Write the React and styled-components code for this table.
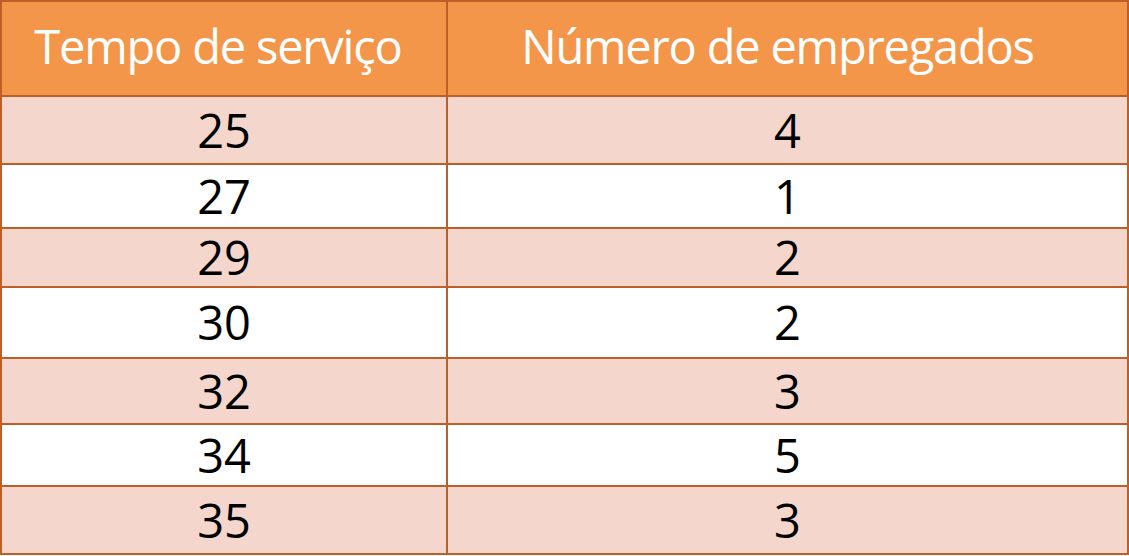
import React from 'react';
import styled, { createGlobalStyle } from 'styled-components';

const GlobalStyle = createGlobalStyle`
  html, body {
    margin: 0;
    padding: 0;
    background: #ffffff;
  }
  body {
    font-family: "Open Sans", "Noto Sans", sans-serif;
  }
`;

const Table = styled.div`
  width: 1129px;
  box-sizing: border-box;
  display: grid;
  grid-template-columns: 444px 1fr;
  grid-template-rows: ${p => p.rows};
  gap: 2px;
  padding: 2px;
  background: #bd5f26;
`;

const HeadCell = styled.div`
  display: flex;
  align-items: center;
  justify-content: center;
  padding: 0 ${p => p.shift}px 4px 0;
  background: #f4964a;
  color: #ffffff;
  font-size: 47px;
  line-height: 1;
  letter-spacing: -1.2px;
`;

const Cell = styled.div`
  display: flex;
  align-items: center;
  justify-content: center;
  background: ${p => (p.shaded ? '#f4d6cc' : '#ffffff')};
  color: #000000;
  font-size: 47px;
  line-height: 1;
`;

const rows = [
  { tempo: 25, qtd: 4, h: 66 },
  { tempo: 27, qtd: 1, h: 62 },
  { tempo: 29, qtd: 2, h: 57 },
  { tempo: 30, qtd: 2, h: 69 },
  { tempo: 32, qtd: 3, h: 64 },
  { tempo: 34, qtd: 5, h: 60 },
  { tempo: 35, qtd: 3, h: 66 },
];

export default function App() {
  const template = ['93px', ...rows.map(r => `${r.h}px`)].join(' ');
  return (
    <>
      <GlobalStyle />
      <Table rows={template}>
        <HeadCell shift={12}>Tempo de serviço</HeadCell>
        <HeadCell shift={20}>Número de empregados</HeadCell>
        {rows.map((r, i) => (
          <React.Fragment key={r.tempo}>
            <Cell shaded={i % 2 === 0}>{r.tempo}</Cell>
            <Cell shaded={i % 2 === 0}>{r.qtd}</Cell>
          </React.Fragment>
        ))}
      </Table>
    </>
  );
}
